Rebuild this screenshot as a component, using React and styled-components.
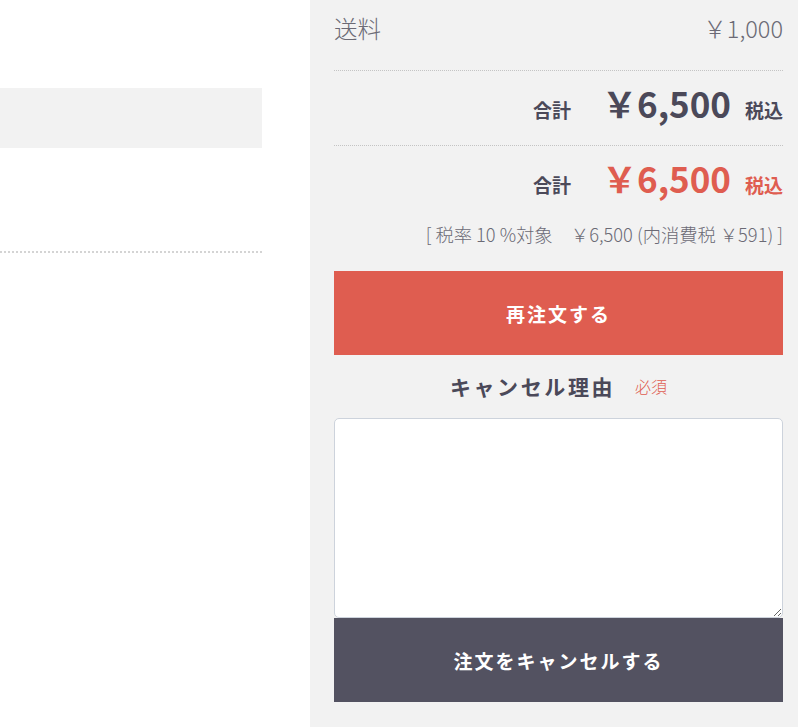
import React from 'react';
import styled, { createGlobalStyle } from 'styled-components';

const GlobalStyle = createGlobalStyle`
    body {
        margin: 0;
        background: #fff;
        font-family: "Noto Sans CJK JP", "Noto Sans", sans-serif;
        color: #4b4959;
    }
`

const Page = styled.div`
    display: flex;
    min-height: 727px;
`

const Main = styled.div`
    width: 310px;
    flex-shrink: 0;
    padding: 88px 48px 0 0;
    box-sizing: border-box;
`

const Band = styled.div`
    height: 60px;
    background-color: #f2f2f2;
`

const DottedBlock = styled.div`
    height: 103px;
    border-bottom: 2px dotted #d4d4d4;
`

const Side = styled.div`
    flex: 1;
    background-color: #f2f2f2;
    padding: 0 15px 25px 24px;
    display: flex;
    flex-direction: column;
`

const Row = styled.div`
    display: flex;
    justify-content: space-between;
    align-items: center;
    height: 71px;
    padding-bottom: 14px;
    box-sizing: border-box;
    border-bottom: 1px dotted #c4c4c4;
    font-size: 23.5px;
    font-weight: 300;
    color: #6b6a75;
`

const TotalRow = styled.div`
    display: flex;
    justify-content: flex-end;
    align-items: baseline;
    padding: ${p => p.$red ? '14px 0 0' : '14px 0 25px'};
    border-bottom: ${p => p.$red ? 'none' : '1px dotted #c4c4c4'};
    line-height: 1;
`

const TotalLabel = styled.span`
    font-size: 19px;
    font-weight: 700;
    color: #4b4959;
    margin-right: 31px;
`

const Amount = styled.span`
    font-size: 35px;
    font-weight: 700;
    color: ${p => p.$red ? '#df5d50' : '#4b4959'};
    margin-right: 14px;
`

const TaxIn = styled.span`
    font-size: 19px;
    font-weight: 700;
    color: ${p => p.$red ? '#df5d50' : '#4b4959'};
`

const TaxNote = styled.div`
    text-align: right;
    font-size: 18.3px;
    line-height: 26px;
    font-weight: 300;
    color: #6b6a75;
    margin-top: 26px;
    white-space: pre;
`

const Button = styled.button`
    display: block;
    width: 100%;
    height: 84px;
    border: none;
    border-radius: 0;
    background-color: ${p => p.$dark ? '#535261' : '#df5d50'};
    color: #fff;
    font-family: inherit;
    font-size: 19px;
    font-weight: 700;
    letter-spacing: 2px;
    cursor: pointer;
    margin-top: ${p => p.$dark ? '0' : '24px'};
`

const ReasonTitle = styled.div`
    display: flex;
    justify-content: center;
    align-items: center;
    height: 63px;
    padding-bottom: 2px;
    box-sizing: border-box;
`

const ReasonText = styled.span`
    font-size: 21px;
    font-weight: 700;
    letter-spacing: 2.6px;
    color: #4b4959;
`

const Required = styled.span`
    font-size: 16px;
    font-weight: 300;
    color: #df5d50;
    margin-left: 20px;
`

const TextArea = styled.textarea`
    display: block;
    width: 100%;
    height: 200px;
    box-sizing: border-box;
    border: 1px solid #cdd3dc;
    border-radius: 5px;
    background: #fff;
    font-family: inherit;
    font-size: 16px;
    padding: 8px;
    margin: 0;
`

export default function App() {
    return (
        <Page>
            <GlobalStyle />
            <Main>
                <Band />
                <DottedBlock />
            </Main>
            <Side>
                <Row>
                    <span>送料</span>
                    <span>￥1,000</span>
                </Row>
                <TotalRow>
                    <TotalLabel>合計</TotalLabel>
                    <Amount>￥6,500</Amount>
                    <TaxIn>税込</TaxIn>
                </TotalRow>
                <TotalRow $red>
                    <TotalLabel>合計</TotalLabel>
                    <Amount $red>￥6,500</Amount>
                    <TaxIn $red>税込</TaxIn>
                </TotalRow>
                <TaxNote>[ 税率 10 %対象　￥6,500 (内消費税 ￥591) ]</TaxNote>
                <Button>再注文する</Button>
                <ReasonTitle>
                    <ReasonText>キャンセル理由</ReasonText>
                    <Required>必須</Required>
                </ReasonTitle>
                <TextArea />
                <Button $dark>注文をキャンセルする</Button>
            </Side>
        </Page>
    );
}
